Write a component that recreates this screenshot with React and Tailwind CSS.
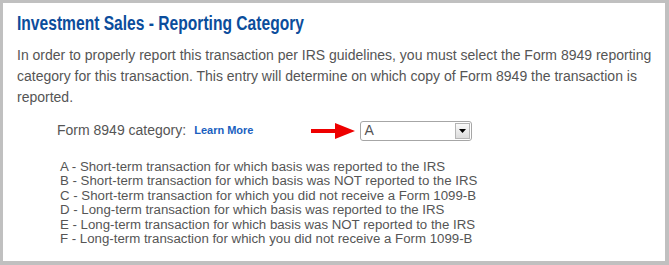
export default function App() {
  const categories = [
    'A - Short-term transaction for which basis was reported to the IRS',
    'B - Short-term transaction for which basis was NOT reported to the IRS',
    'C - Short-term transaction for which you did not receive a Form 1099-B',
    'D - Long-term transaction for which basis was reported to the IRS',
    'E - Long-term transaction for which basis was NOT reported to the IRS',
    'F - Long-term transaction for which you did not receive a Form 1099-B',
  ];

  return (
    <div className="w-[669px] h-[265px] bg-[#c0c0c0] pl-[3px] pt-[3px] pr-[4px] pb-[4px] font-['Liberation_Sans',Arial,sans-serif]">
      <div className="h-full bg-white pl-[14px] pr-[10px] pt-[6px]">
        <h1 className="whitespace-nowrap font-bold text-[19.5px] leading-[28px] text-[#0b4d9c]">
          <span className="inline-block origin-left scale-x-[0.8]">Investment Sales - Reporting Category</span>
        </h1>
        <p className="mt-[8px] text-[14px] leading-[21px] text-[#555]">
          In order to properly report this transaction per IRS guidelines, you must select the Form 8949 reporting category for this transaction. This entry will determine on which copy of Form 8949 the transaction is reported.
        </p>

        {/* category row */}
        <div className="mt-[12px] flex items-center pl-[40px]">
          <span className="text-[14px] text-[#555]">Form 8949 category:</span>
          <a href="#" className="ml-[8px] text-[11px] font-bold text-[#1a5fbf]">Learn More</a>
          <svg width="44" height="16" viewBox="0 0 44 16" className="ml-[58px]">
            <rect x="0" y="6" width="26" height="4" fill="#ee0000" />
            <polygon points="24,0 44,8 24,16" fill="#ee0000" />
          </svg>
          <div className="ml-[5px] w-[112px] h-[20px] border border-[#a6a6a6] rounded-[3px] flex items-center justify-between bg-white">
            <span className="pl-[3px] text-[14px] text-[#555]">A</span>
            <span className="w-[15px] h-[16px] mr-[1px] border border-[#b5b5b5] bg-gradient-to-b from-[#fafafa] to-[#dcdcdc] flex items-center justify-center">
              <svg width="7" height="4" viewBox="0 0 7 4">
                <polygon points="0,0 7,0 3.5,4" fill="#000" />
              </svg>
            </span>
          </div>
        </div>

        <ul className="mt-[19px] pl-[43px] text-[13.25px] leading-[14.4px] text-[#555]">
          {categories.map((c) => (
            <li key={c}>{c}</li>
          ))}
        </ul>
      </div>
    </div>
  );
}
